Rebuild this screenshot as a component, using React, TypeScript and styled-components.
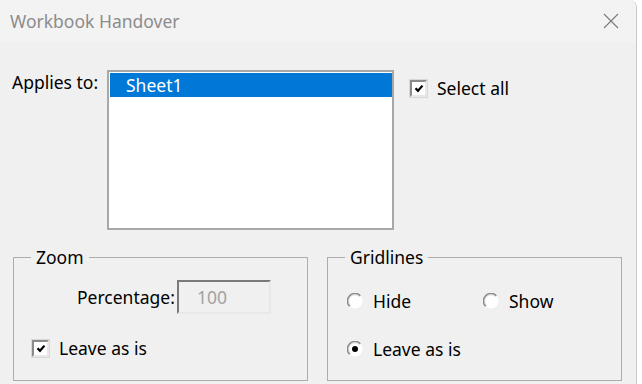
import React from 'react';
import styled, { createGlobalStyle } from 'styled-components';

const GlobalStyle = createGlobalStyle`
    html, body {
        margin: 0;
        padding: 0;
        background: #ffffff;
    }
    body {
        font-family: 'Noto Sans', 'Open Sans', Arial, sans-serif;
        color: #000000;
    }
`;

const FONT = '17.5px';

const Window = styled.div`
    width: 636px;
    height: 384px;
    background: #f0f0f0;
    border-right: 1px solid #c8c8c8;
    border-top-right-radius: 8px;
    overflow: hidden;
    display: flex;
    flex-direction: column;
`;

const TitleBar = styled.div`
    height: 42px;
    flex: none;
    display: flex;
    align-items: center;
    justify-content: space-between;
    padding: 0 17px 0 10px;
    background: #f3f3f3;
`;

const Title = styled.span`
    font-size: ${FONT};
    color: #8c8c8c;
`;

const CloseButton = styled.svg`
    width: 16px;
    height: 16px;
    display: block;
`;

const Body = styled.div`
    flex: 1;
    display: flex;
    flex-direction: column;
    padding: 28px 14px 0 13px;
`;

const TopRow = styled.div`
    display: flex;
    align-items: flex-start;
`;

const FieldLabel = styled.span`
    width: 95px;
    margin-left: -1px;
    padding-top: 1px;
    font-size: ${FONT};
    line-height: 22px;
`;

const ListBox = styled.div`
    width: 282px;
    height: 155px;
    background: #ffffff;
    border: 2px solid #a8a8a8;
    padding: 1px 0 0 1px;
`;

const ListItem = styled.div<{ $selected?: boolean }>`
    height: 24px;
    line-height: 24px;
    padding-left: 16px;
    font-size: ${FONT};
    background: ${p => (p.$selected ? '#0078d7' : 'transparent')};
    color: ${p => (p.$selected ? '#ffffff' : '#000000')};
`;

const CheckRow = styled.label<{ $offset?: number }>`
    display: flex;
    align-items: center;
    gap: 10px;
    font-size: ${FONT};
    line-height: 22px;
    margin-left: ${p => p.$offset ?? 0}px;
`;

const Box = styled.span`
    width: 17px;
    height: 17px;
    box-sizing: border-box;
    background: #ffffff;
    border: 2px solid;
    border-color: #8a8a8a #e8e8e8 #e8e8e8 #8a8a8a;
    box-shadow: 0 0 0 1px #d8d8d8;
    display: flex;
    align-items: center;
    justify-content: center;
`;

const GroupRow = styled.div`
    display: flex;
    gap: 19px;
    margin-top: 17px;
`;

const Group = styled.fieldset`
    width: 295px;
    height: 134px;
    box-sizing: border-box;
    margin: 0;
    border: 1px solid #adadad;
    padding: 0;
    display: flex;
    flex-direction: column;
`;

const Legend = styled.legend`
    margin-left: 17px;
    padding: 0 5px;
    font-size: ${FONT};
    line-height: 20px;
`;

const PercentRow = styled.div`
    display: flex;
    align-items: center;
    margin: 13px 0 0 63px;
    gap: 2px;
    font-size: ${FONT};
`;

const NumberInput = styled.div`
    width: 94px;
    height: 34px;
    box-sizing: border-box;
    border: 2px solid;
    border-color: #7a7a7a #e8e8e8 #e8e8e8 #7a7a7a;
    background: #f0f0f0;
    color: #a3a3a3;
    font-size: ${FONT};
    line-height: 30px;
    padding-left: 18px;
`;

const RadioGrid = styled.div`
    display: grid;
    grid-template-columns: 136px auto;
    row-gap: 26px;
    margin: 23px 0 0 19px;
`;

const ZoomCheck = styled.div`
    margin: 23px 0 0 18px;
`;

const Check = () => (
    <Box>
        <svg width="10" height="9" viewBox="0 0 10 9">
            <path d="M1.5 4.2 L4 6.8 L8.5 1.6" stroke="#000" strokeWidth="2.2" fill="none" />
        </svg>
    </Box>
);

const Radio = ({ checked }: { checked?: boolean }) => (
    <svg width="16" height="16" viewBox="0 0 16 16">
        <circle cx="8" cy="8" r="7.5" fill="#ffffff" />
        <path d="M2.7 13.3 A7 7 0 0 1 13.3 2.7" stroke="#8a8a8a" strokeWidth="1.6" fill="none" />
        <path d="M3.5 12.5 A6 6 0 0 1 12.5 3.5" stroke="#d0d0d0" strokeWidth="1" fill="none" />
        {checked && <circle cx="8" cy="8" r="3" fill="#000000" />}
    </svg>
);

const App = () => (
    <>
        <GlobalStyle />
        <Window>
            <TitleBar>
                <Title>Workbook Handover</Title>
                <CloseButton viewBox="0 0 16 16">
                    <path d="M1 1 L15 15 M15 1 L1 15" stroke="#7a7a7a" strokeWidth="1.1" />
                </CloseButton>
            </TitleBar>
            <Body>
                <TopRow>
                    <FieldLabel>Applies to:</FieldLabel>
                    <ListBox>
                        <ListItem $selected>Sheet1</ListItem>
                    </ListBox>
                    <CheckRow $offset={16} style={{ marginTop: 7 }}>
                        <Check />
                        Select all
                    </CheckRow>
                </TopRow>
                <GroupRow>
                    <Group>
                        <Legend>Zoom</Legend>
                        <PercentRow>
                            Percentage:
                            <NumberInput>100</NumberInput>
                        </PercentRow>
                        <ZoomCheck>
                            <CheckRow>
                                <Check />
                                Leave as is
                            </CheckRow>
                        </ZoomCheck>
                    </Group>
                    <Group>
                        <Legend>Gridlines</Legend>
                        <RadioGrid>
                            <CheckRow>
                                <Radio />
                                Hide
                            </CheckRow>
                            <CheckRow>
                                <Radio />
                                Show
                            </CheckRow>
                            <CheckRow>
                                <Radio checked />
                                Leave as is
                            </CheckRow>
                        </RadioGrid>
                    </Group>
                </GroupRow>
            </Body>
        </Window>
    </>
);

export default App;
